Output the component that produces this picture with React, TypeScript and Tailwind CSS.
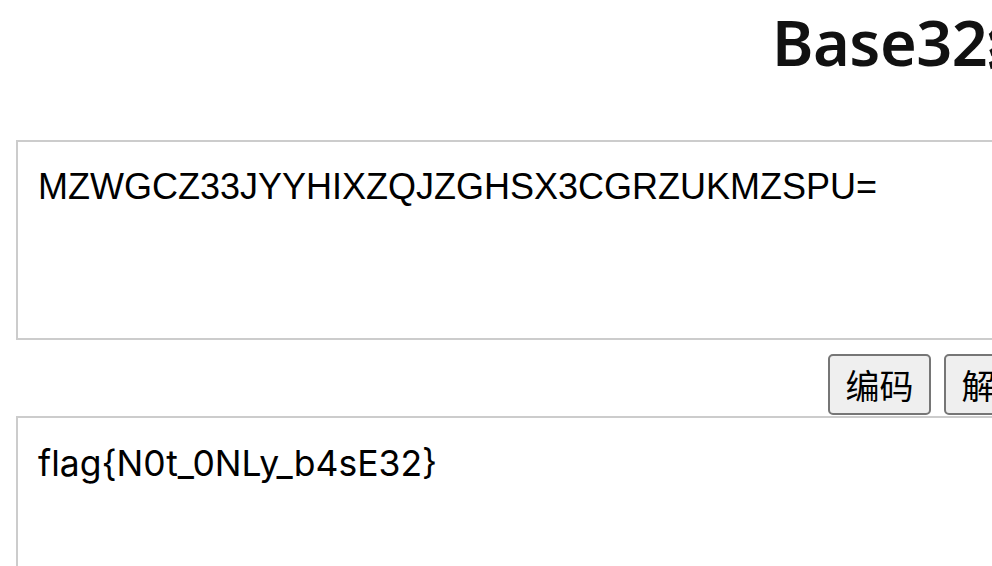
import React from 'react';

// Base32 encode/decode page — the shot is a 2x view cropped on the right.
const INPUT = 'MZWGCZ33JYYHIXZQJZGHSX3CGRZUKMZSPU=';
const OUTPUT = 'flag{N0t_0NLy_b4sE32}';

export default function App() {
  return (
    <div className="flex h-[566px] w-[992px] flex-col overflow-hidden bg-white font-['Liberation_Sans','Noto_Sans_CJK_SC',sans-serif] text-black">
      {/* ── Title ── */}
      <div className="h-[140px] shrink-0 pl-[772px] pt-[10px]">
        <h1 className="whitespace-nowrap font-['Noto_Sans','Noto_Sans_CJK_SC',sans-serif] text-[63px] font-semibold leading-[64px] tracking-[-0.5px] text-[#111]">
          Base32编码解码
        </h1>
      </div>

      {/* ── Input ── */}
      <textarea
        readOnly
        defaultValue={INPUT}
        className="ml-[16px] h-[200px] w-[1400px] shrink-0 resize-none border-2 border-[#cccccc] bg-white px-[20px] pt-[24px] text-[36px] leading-[42px] text-black outline-none"
      />

      {/* ── Actions ── */}
      <div className="mt-[14px] flex h-[61px] shrink-0 gap-[13px] pl-[828px]">
        <button
          type="button"
          className="h-[61px] w-[103px] shrink-0 rounded-[5px] border-2 border-[#767676] bg-[#efefef] font-['Noto_Sans_CJK_SC',sans-serif] text-[34px] leading-none text-black"
        >
          编码
        </button>
        <button
          type="button"
          className="h-[61px] w-[103px] shrink-0 rounded-[5px] border-2 border-[#767676] bg-[#efefef] font-['Noto_Sans_CJK_SC',sans-serif] text-[34px] leading-none text-black"
        >
          解码
        </button>
      </div>

      {/* ── Output ── */}
      <textarea
        readOnly
        defaultValue={OUTPUT}
        className="ml-[16px] mt-px h-[200px] w-[1400px] shrink-0 resize-none border-2 border-[#cccccc] bg-white px-[20px] pt-[25px] font-['Inter','Noto_Sans_CJK_SC',sans-serif] text-[35.5px] leading-[42px] text-black outline-none"
      />
    </div>
  );
}
